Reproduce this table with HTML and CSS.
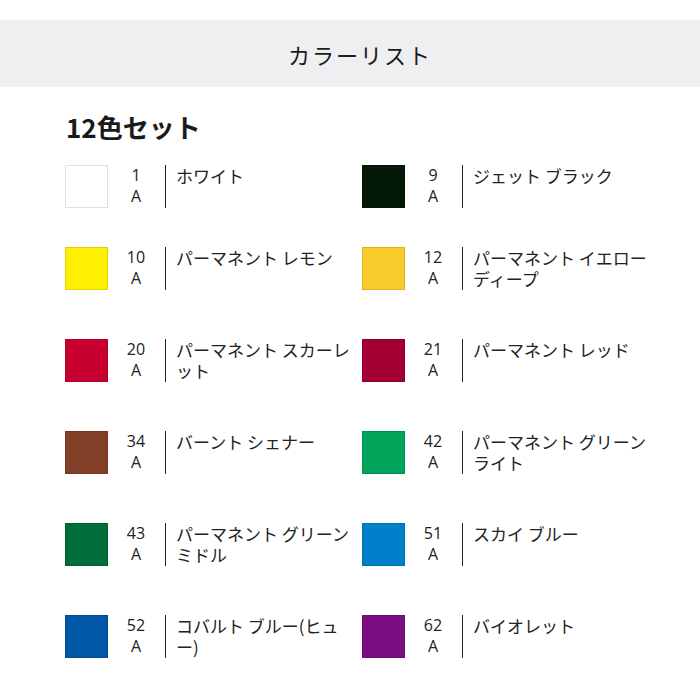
FILE: index.html
```html
<!DOCTYPE html>
<html lang="ja">
<head>
<meta charset="utf-8">
<link rel="stylesheet" href="styles.css">
</head>
<body>
<header class="band"><h1 class="band-title">カラーリスト</h1></header>
<h2 class="set-title">12色セット</h2>
<ul class="colors">
  <li class="color"><span class="swatch" style="background:#ffffff"></span><span class="code">1<br>A</span><span class="name">ホワイト</span></li>
  <li class="color"><span class="swatch" style="background:#031806"></span><span class="code">9<br>A</span><span class="name">ジェット ブラック</span></li>
  <li class="color"><span class="swatch" style="background:#fff000"></span><span class="code">10<br>A</span><span class="name">パーマネント レモン</span></li>
  <li class="color"><span class="swatch" style="background:#f9cb2b"></span><span class="code">12<br>A</span><span class="name">パーマネント イエロー ディープ</span></li>
  <li class="color"><span class="swatch" style="background:#c8002f"></span><span class="code">20<br>A</span><span class="name">パーマネント スカーレット</span></li>
  <li class="color"><span class="swatch" style="background:#a40032"></span><span class="code">21<br>A</span><span class="name">パーマネント レッド</span></li>
  <li class="color"><span class="swatch" style="background:#833f27"></span><span class="code">34<br>A</span><span class="name">バーント シェナー</span></li>
  <li class="color"><span class="swatch" style="background:#00a55b"></span><span class="code">42<br>A</span><span class="name">パーマネント グリーン ライト</span></li>
  <li class="color"><span class="swatch" style="background:#006e38"></span><span class="code">43<br>A</span><span class="name">パーマネント グリーン ミドル</span></li>
  <li class="color"><span class="swatch" style="background:#0080cb"></span><span class="code">51<br>A</span><span class="name">スカイ ブルー</span></li>
  <li class="color"><span class="swatch" style="background:#0057a8"></span><span class="code">52<br>A</span><span class="name">コバルト ブルー(ヒュー)</span></li>
  <li class="color"><span class="swatch" style="background:#7a0e80"></span><span class="code">62<br>A</span><span class="name">バイオレット</span></li>
</ul>
</body>
</html>
```
FILE: styles.css
```css
* { box-sizing: border-box; }
body {
  margin: 0;
  background: #fff;
  color: #1a1a1a;
  font-family: "Noto Sans CJK JP", "Noto Sans", sans-serif;
}
.band {
  margin-top: 20px;
  height: 67px;
  background: #eeeff0;
  display: flex;
  align-items: center;
  justify-content: center;
  padding-left: 20px;
}
.band-title {
  margin: 0;
  font-size: 22px;
  font-weight: 400;
  letter-spacing: 2px;
  line-height: 1;
}
.set-title {
  margin: 23px 0 21px 66px;
  font-size: 26px;
  line-height: 34px;
  font-weight: 700;
}
.colors {
  list-style: none;
  margin: 0;
  padding: 0 0 0 65px;
  display: grid;
  grid-template-columns: 297px 297px;
  row-gap: 39px;
}
.color {
  display: flex;
  align-items: flex-start;
}
.swatch {
  flex: none;
  width: 43px;
  height: 43px;
  border: 1px solid rgba(0,0,0,0.12);
}
.code {
  flex: none;
  width: 48px;
  height: 43px;
  margin-left: 10px;
  padding-right: 11px;
  border-right: 1px solid #222;
  text-align: center;
  font-family: "Open Sans", "Noto Sans", sans-serif;
  font-size: 16px;
  line-height: 21px;
  color: #222;
}
.name {
  width: 188px;
  padding: 0 0 11px 10px;
  font-size: 17px;
  line-height: 21px;
  color: #222;
}
```
